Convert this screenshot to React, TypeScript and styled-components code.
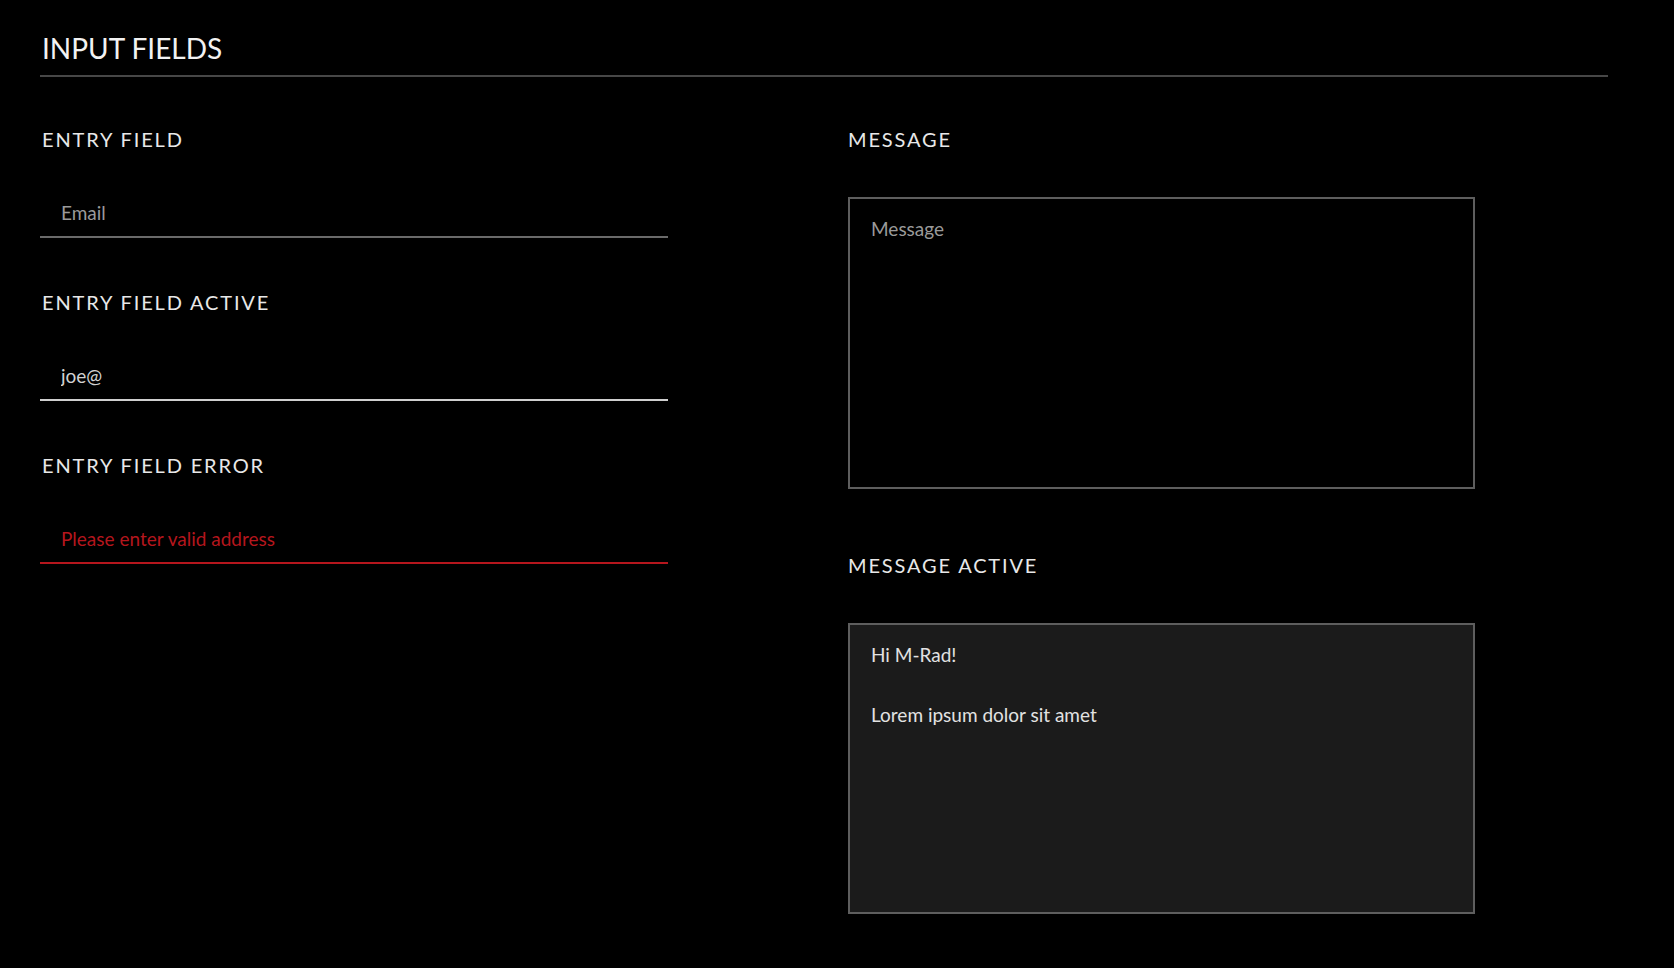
import React from "react"
import styled, { createGlobalStyle } from "styled-components"

const colors = {
  bg: "#000000",
  text: "#e8e8e8",
  muted: "#9a9a9a",
  line: "#6a6a6a",
  lineActive: "#cfcfcf",
  divider: "#474747",
  error: "#b5161d",
  boxBorder: "#5e5e5e",
  boxActive: "#1b1b1b",
}

const GlobalStyle = createGlobalStyle`
  html, body {
    margin: 0;
    padding: 0;
    background: ${colors.bg};
  }
  body {
    font-family: Lato, "Liberation Sans", sans-serif;
    color: ${colors.text};
  }
  * {
    box-sizing: border-box;
  }
`

const Page = styled.div`
  min-height: 968px;
  padding: 31px 66px 0 40px;
`

const Header = styled.header`
  border-bottom: 2px solid ${colors.divider};
  padding-bottom: 10px;
`

const Title = styled.h1`
  margin: 0 0 0 2px;
  font-size: 28px;
  line-height: 34px;
  font-weight: 400;
  color: #f2f2f2;
`

const Columns = styled.div`
  display: grid;
  grid-template-columns: 628px 627px;
  column-gap: 180px;
  padding-top: 50px;
`

const Column = styled.div<{ $gap: number }>`
  display: flex;
  flex-direction: column;
  gap: ${p => p.$gap}px;
`

const Field = styled.div`
  display: flex;
  flex-direction: column;
`

const Label = styled.div<{ $inset?: number }>`
  margin-left: ${p => p.$inset ?? 2}px;
  font-size: 20px;
  line-height: 24px;
  letter-spacing: 1.85px;
  text-transform: uppercase;
  color: ${colors.text};
`

type Tone = "idle" | "active" | "error"

const lineColor = (t: Tone) => (t === "error" ? colors.error : t === "active" ? colors.lineActive : colors.line)
const textColor = (t: Tone) => (t === "error" ? colors.error : t === "active" ? "#d2d2d2" : colors.muted)

const Input = styled.input<{ $tone: Tone }>`
  margin-top: 51px;
  width: 100%;
  padding: 0 20px 13px 21px;
  border: none;
  border-bottom: 2px solid ${p => lineColor(p.$tone)};
  background: transparent;
  font-family: inherit;
  font-size: 19px;
  line-height: 21px;
  height: 36px;
  color: ${p => textColor(p.$tone)};
  outline: none;
  &::placeholder {
    color: ${colors.muted};
  }
`

const Area = styled.textarea<{ $active?: boolean }>`
  margin-top: 46px;
  width: 100%;
  height: ${p => (p.$active ? 291 : 292)}px;
  padding: 15px 20px 15px 21px;
  border: 2px solid ${colors.boxBorder};
  background: ${p => (p.$active ? colors.boxActive : "transparent")};
  font-family: inherit;
  font-size: 19px;
  line-height: 30px;
  color: #e2e2e2;
  resize: none;
  outline: none;
  &::placeholder {
    color: ${colors.muted};
  }
`

export default function App() {
  return (
    <>
      <GlobalStyle />
      <Page>
        <Header>
          <Title>INPUT FIELDS</Title>
        </Header>
        <Columns>
          <Column $gap={52}>
            <Field>
              <Label>Entry field</Label>
              <Input $tone="idle" placeholder="Email" readOnly />
            </Field>
            <Field>
              <Label>Entry field active</Label>
              <Input $tone="active" defaultValue="joe@" readOnly />
            </Field>
            <Field>
              <Label>Entry field error</Label>
              <Input $tone="error" defaultValue="Please enter valid address" readOnly />
            </Field>
          </Column>
          <Column $gap={64}>
            <Field>
              <Label $inset={0}>Message</Label>
              <Area placeholder="Message" readOnly />
            </Field>
            <Field>
              <Label $inset={0}>Message active</Label>
              <Area $active defaultValue={"Hi M-Rad!\n\nLorem ipsum dolor sit amet"} readOnly />
            </Field>
          </Column>
        </Columns>
      </Page>
    </>
  )
}
